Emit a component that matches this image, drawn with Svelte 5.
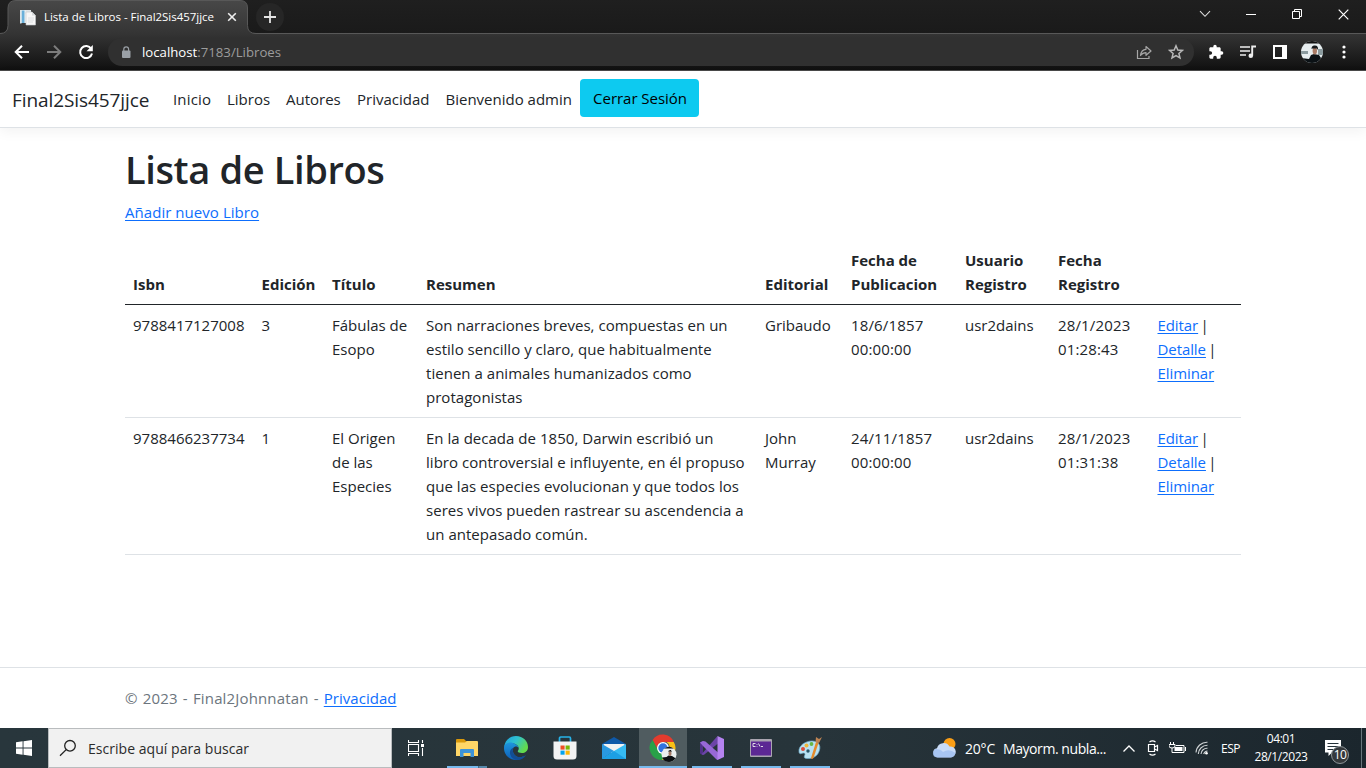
<script>
  const nav = [
    { label: 'Inicio', cls: 'n1' },
    { label: 'Libros', cls: 'n2' },
    { label: 'Autores', cls: 'n3' },
    { label: 'Privacidad', cls: 'n4' },
    { label: 'Bienvenido admin', cls: 'n5' }
  ];
  const heads = ['Isbn', 'Edición', 'Título', 'Resumen', 'Editorial', 'Fecha de\nPublicacion', 'Usuario\nRegistro', 'Fecha\nRegistro', ''];
  const books = [
    ['9788417127008', '3', 'Fábulas de\nEsopo', 'Son narraciones breves, compuestas en un\nestilo sencillo y claro, que habitualmente\ntienen a animales humanizados como\nprotagonistas', 'Gribaudo', '18/6/1857\n00:00:00', 'usr2dains', '28/1/2023\n01:28:43'],
    ['9788466237734', '1', 'El Origen\nde las\nEspecies', 'En la decada de 1850, Darwin escribió un\nlibro controversial e influyente, en él propuso\nque las especies evolucionan y que todos los\nseres vivos pueden rastrear su ascendencia a\nun antepasado común.', 'John\nMurray', '24/11/1857\n00:00:00', 'usr2dains', '28/1/2023\n01:31:38']
  ];
</script>

<div class="screen">
  <div class="tabstrip">
    <div class="tab">
      <svg class="tabshape" width="256" height="34" viewBox="0 0 256 34">
        <defs><linearGradient id="tg" x1="0" y1="0" x2="0" y2="1"><stop offset="0" stop-color="#484848" /><stop offset="1" stop-color="#343434" /></linearGradient></defs>
        <path d="M0 34V33.500Q8 33.500 8 25.500V8Q8 .5 16 .5H240Q247.500 .5 247.500 8V25.500Q247.500 33.500 256 33.500V34Z" fill="url(#tg)" />
        <path d="M0 33.500Q8 33.500 8 25.500V8Q8 .5 16 .5H240Q247.500 .5 247.500 8V25.500Q247.500 33.500 256 33.500" fill="none" stroke="#585858" />
      </svg>
      <svg class="fav" width="16" height="17" viewBox="0 0 16 17">
        <path d="M1 1H11V14H1Z" fill="#eef2f4" /><path d="M1.500 1.500H4.500V14H1.500Z" fill="#69b0da" /><path d="M0 1H1.500V14.500H0Z" fill="#dce6ea" /><path d="M5.500 1H11V5H5.500Z" fill="#dfe5e8" />
        <path d="M6 3H12L15.500 6.500V16H6Z" fill="#f7f7f7" stroke="#c5c8ca" stroke-width=".6" /><path d="M12 3V6.500H15.500" fill="#d6d9db" /><path d="M8 9H14M8 11H14M8 13H13" stroke="#d5d8da" stroke-width=".8" />
      </svg>
      <span class="tabtitle">Lista de Libros - Final2Sis457jjce</span>
      <svg class="tabx" width="10" height="10" viewBox="0 0 10 10"><path d="M1.200 1.200L8.800 8.800M8.800 1.200L1.200 8.800" stroke="#eee" stroke-width="1.600" /></svg>
    </div>
    <div class="plus"><svg width="12" height="12" viewBox="0 0 12 12"><path d="M6 0V12M0 6H12" stroke="#e4e4e4" stroke-width="1.800" /></svg></div>
    <div class="wins">
      <span><svg width="12" height="8" viewBox="0 0 12 8"><path d="M1 1.200L6 6.300L11 1.200" fill="none" stroke="#ddd" stroke-width="1.100" /></svg></span>
      <span><svg width="10" height="2" viewBox="0 0 10 2"><path d="M0 1.500H10" stroke="#fff" /></svg></span>
      <span><svg width="10" height="10" viewBox="0 0 10 10"><path d="M.5 2.500H7.500V9.500H.5ZM2.500 2.500V.5H9.500V7.500H7.500" fill="none" stroke="#fff" /></svg></span>
      <span><svg width="11" height="11" viewBox="0 0 11 11"><path d="M.7 .7L10.300 10.300M10.300 .7L.7 10.300" stroke="#fff" stroke-width="1.200" /></svg></span>
    </div>
  </div>
  <div class="toolbar">
    <div class="slots">
      <span><svg width="16" height="16" viewBox="0 0 16 16"><path d="M15 8H2M8 1.700L1.700 8L8 14.300" fill="none" stroke="#fff" stroke-width="2" /></svg></span>
      <span><svg width="16" height="16" viewBox="0 0 16 16"><path d="M1 8H14M8 1.700L14.300 8L8 14.300" fill="none" stroke="#7c7c7c" stroke-width="2" /></svg></span>
      <span><svg width="16" height="16" viewBox="0 0 16 16"><path d="M13.200 4.800A6 6 0 1 0 14 9.500" fill="none" stroke="#fff" stroke-width="2" /><path d="M14.800 1V7.300H8.500Z" fill="#fff" /></svg></span>
    </div>
    <div class="omni">
      <svg class="lock" width="10" height="13" viewBox="0 0 10 13"><rect x="1" y="4.500" width="8.500" height="7.500" rx="1" fill="#9aa0a6" /><path d="M2.800 5V3.200A2.400 2.400 0 0 1 7.600 3.200V5" fill="none" stroke="#9aa0a6" stroke-width="1.200" /></svg>
      <span class="url"><b>localhost</b>:7183/Libroes</span>
      <div class="slots">
        <span><svg width="16" height="16" viewBox="0 0 16 16"><path d="M1.500 6V14.500H13V12" fill="none" stroke="#a6a6a6" stroke-width="1.200" /><path d="M4.500 11.500C5 7.500 7 5.500 10 5.300V2.500L15 7L10 11.300V8.600C7.500 8.600 6 9.500 4.500 11.500Z" fill="none" stroke="#a6a6a6" stroke-width="1.200" stroke-linejoin="round" /></svg></span>
        <span><svg width="16" height="16" viewBox="0 0 16 16"><path d="M8 1.800L9.800 6L14.400 6.400L10.900 9.400L12 13.900L8 11.500L4 13.900L5.100 9.400L1.600 6.400L6.200 6Z" fill="none" stroke="#b8b8b8" stroke-width="1.500" /></svg></span>
      </div>
    </div>
    <div class="slots">
      <span><svg width="16" height="16" viewBox="0 0 24 24"><path d="M20.500 11H19V7c0-1.100-.9-2-2-2h-4V3.500a2.500 2.500 0 0 0-5 0V5H4c-1.100 0-2 .9-2 2v3.800h1.500a2.700 2.700 0 0 1 0 5.400H2V20c0 1.100.9 2 2 2h3.800v-1.500a2.700 2.700 0 0 1 5.400 0V22H17c1.100 0 2-.9 2-2v-4h1.500a2.500 2.500 0 0 0 0-5z" fill="#fff" /></svg></span>
      <span><svg width="16" height="14" viewBox="0 0 16 14"><path d="M0 2H10M0 6H10M0 10H6" stroke="#eee" stroke-width="1.700" /><path d="M12.200 10.500V1.500H16" fill="none" stroke="#eee" stroke-width="1.900" /><circle cx="10.800" cy="10.800" r="2.300" fill="#eee" /></svg></span>
      <span><svg width="14" height="14" viewBox="0 0 14 14"><path d="M0 0H14V14H0ZM2 2V12H9V2Z" fill="#fff" fill-rule="evenodd" /></svg></span>
      <span><svg width="22" height="22" viewBox="0 0 22 22"><defs><clipPath id="av"><circle cx="11" cy="11" r="11" /></clipPath></defs><g clip-path="url(#av)"><rect width="22" height="22" fill="#e6edef" /><rect width="22" height="2.500" fill="#111" /><path d="M0 10H7V13H0ZM17 8H22V14H17Z" fill="#8a9a9e" /><path d="M0 17L8 18L10 14L13 13L18 14L22 20V22H0Z" fill="#0b1115" /><ellipse cx="13.800" cy="9.800" rx="2.200" ry="3.600" fill="#a87b66" /><path d="M10.500 8Q10.500 4 14 4.500Q17.500 4.500 17 9L16 7.500H11.500Z" fill="#16191b" /></g></svg></span>
      <span><svg width="4" height="14" viewBox="0 0 4 14"><g fill="#fff"><circle cx="2" cy="2" r="1.600" /><circle cx="2" cy="7" r="1.600" /><circle cx="2" cy="12" r="1.600" /></g></svg></span>
    </div>
  </div>

  <div class="page">
    <header>
      <a class="brand" href="#top">Final2Sis457jjce</a>
      {#each nav as n}<a class="nav {n.cls}" href="#top">{n.label}</a>{/each}
      <button>Cerrar Sesión</button>
    </header>
    <main>
      <h1>Lista de Libros</h1>
      <p><a class="link add" href="#top">Añadir nuevo Libro</a></p>
      <table>
        <colgroup><col class="c1" /><col class="c2" /><col class="c3" /><col class="c4" /><col class="c5" /><col class="c6" /><col class="c7" /><col class="c8" /><col class="c9" /></colgroup>
        <thead><tr>{#each heads as h}<th>{h}</th>{/each}</tr></thead>
        <tbody>
          {#each books as b}
            <tr>
              {#each b as cell, i}<td class="t{i}">{cell}</td>{/each}
              <td class="acts"><a class="link" href="#top">Editar</a> |<br /><a class="link" href="#top">Detalle</a> |<br /><a class="link" href="#top">Eliminar</a></td>
            </tr>
          {/each}
        </tbody>
      </table>
    </main>
    <footer><div>© 2023 - Final2Johnnatan - <a class="link" href="#top">Privacidad</a></div></footer>
  </div>

  <div class="taskbar">
    <div class="start"><svg width="16" height="16" viewBox="0 0 16 16"><path d="M0 2.200L6.600 1.300V7.500H0ZM7.500 1.200L16 0V7.500H7.500ZM0 8.400H6.600V14.700L0 13.800ZM7.500 8.400H16V16L7.500 14.800Z" fill="#fff" /></svg></div>
    <div class="search">
      <svg width="18" height="18" viewBox="0 0 18 18"><circle cx="11" cy="6.800" r="5.300" fill="none" stroke="#222" stroke-width="1.300" /><path d="M7.200 10.600L1 16.800" stroke="#222" stroke-width="1.300" /></svg>
      <span>Escribe aquí para buscar</span>
    </div>
    <div class="tview"><svg width="17" height="16" viewBox="0 0 17 16"><path d="M.5 0V2.500H10.500V0M.5 16V13.500H10.500V16M.5 4.500H10.500V11.500H.5ZM14.500 0V3M14.500 8V16" fill="none" stroke="#fff" stroke-width="1.100" /><rect x="13" y="4" width="3" height="3" fill="#fff" /></svg></div>
    <div class="app">
      <svg width="22" height="20" viewBox="0 0 22 20"><path d="M0 2Q0 1 1 1H8L10 3H21V8H0Z" fill="#d9980b" /><path d="M0 4.500H9L11 3H21Q22 3 22 4V18H0Z" fill="#ffd667" /><path d="M4 19V12Q4 11 5 11H17Q18 11 18 12V19H14.500V15H7.500V19Z" fill="#3d93d8" /></svg>
      <i class="multi"></i>
    </div>
    <div class="app">
      <svg width="24" height="24" viewBox="0 0 24 24"><defs><linearGradient id="e1" x1="0" y1="0" x2="1" y2=".5"><stop offset="0" stop-color="#1f9fe0" /><stop offset=".5" stop-color="#2fc2d0" /><stop offset="1" stop-color="#63da4c" /></linearGradient><linearGradient id="e2" x1="0" y1="0" x2="0" y2="1"><stop offset="0" stop-color="#1e96dd" /><stop offset="1" stop-color="#0e5fb8" /></linearGradient></defs><path d="M.2 11C.8 4.500 5.600 0 12 0C19 0 24 5 24 11C24 15 21 17 18 17C15 17 13.500 16 13.800 15C15 13.500 15 12 14.200 10.500C12.500 7 5 5 .2 11Z" fill="url(#e1)" /><path d="M0 12C0 7.500 5 5.500 9 7C12 8 14.500 10 14.600 12.200C14 10.600 12 10 10.300 11C7.600 12.600 8.500 18 12.500 20.500C15.500 22.200 18.500 21 20.500 19.500C18 23 15 24 12 24C5 24 0 18.500 0 12Z" fill="url(#e2)" /><path d="M9.500 11.800C7.800 15 9.500 19 13.500 20.800C17 22 20 20.800 22.400 18.500C20 23 15.500 24.500 11.500 23.800C5 21.500 4 13.500 9.500 11.800Z" fill="#124d94" /></svg>
    </div>
    <div class="app">
      <svg width="24" height="24" viewBox="0 0 24 24"><path d="M6.500 6V2.200Q6.500 1 7.700 1H16.300Q17.500 1 17.500 2.200V6" fill="none" stroke="#27b2e8" stroke-width="1.700" /><path d="M.5 5.500H23.500V20Q23.500 23.500 20 23.500H4Q.5 23.500 .5 20Z" fill="#f3f3f3" /><path d="M7.500 9.500H11.600V13.600H7.500Z" fill="#f04e23" /><path d="M12.600 9.500H16.700V13.600H12.600Z" fill="#7cb705" /><path d="M7.500 14.600H11.600V18.700H7.500Z" fill="#04a3ed" /><path d="M12.600 14.600H16.700V18.700H12.600Z" fill="#fbb605" /></svg>
    </div>
    <div class="app">
      <svg width="24" height="22" viewBox="0 0 24 22"><path d="M0 7L12 0L24 7V12H0Z" fill="#0f59a8" /><path d="M1.500 7H22.500V16H1.500Z" fill="#f2f2f2" /><path d="M0 7L12 14L0 22Z" fill="#2998e0" /><path d="M24 7V22H0L12 14Z" fill="#36bbf3" /><path d="M0 22L12 14L24 22Z" fill="#1d9fe5" /></svg>
    </div>
    <div class="app active">
      <svg width="28" height="28" viewBox="0 0 28 28"><path d="M3.600 6A12 12 0 0 1 24.800 8H14A6 6 0 0 0 8.500 16Z" fill="#e33b2e" /><path d="M3.600 6A12 12 0 0 0 13 25.900L18.500 16.500A6 6 0 0 1 8.700 15.500Z" fill="#28a148" /><path d="M24.800 8A12 12 0 0 1 13 25.900L19.200 17A6 6 0 0 0 17.500 8Z" fill="#fbc116" /><circle cx="14" cy="14" r="6" fill="#fff" /><circle cx="14" cy="14" r="4.700" fill="#3072df" /><circle cx="20" cy="20.500" r="7.500" fill="#e9eeee" /><path d="M15.400 14.600A7.500 7.500 0 0 1 24.600 14.600Z" fill="#111" /><path d="M13.200 23.500L17.500 23L19.500 21.500L23 22L26.500 24.300Q24 28 20 28Q15 28 13.200 23.500Z" fill="#0c1013" /><ellipse cx="21" cy="19.500" rx="1.500" ry="2.500" fill="#a47a66" /><path d="M19 18.500Q19 15.500 22 16L23 18.500L22 17.500H19Z" fill="#111" /></svg>
      <i></i>
    </div>
    <div class="app">
      <svg width="24" height="24" viewBox="0 0 24 24"><path d="M0 6.500L3 5V19L0 17.500Z" fill="#52318a" /><path d="M1.500 18.300L17.500 0L18 7.500L4 18.800L3 19Z" fill="#6c44a8" /><path d="M0 6.500L3 5L5.500 5.500L18 16.500V24L16.500 23.500L3 10Z" fill="#9868d6" /><path d="M17.500 0L24 3V21L17.500 24Z" fill="#b583f0" /></svg>
      <i></i>
    </div>
    <div class="app">
      <svg width="22" height="18" viewBox="0 0 22 18"><rect width="22" height="18" rx="1" fill="#aaa5b1" /><rect x="1" y="2.500" width="20" height="14" fill="#5c2894" /><path d="M5.500 4.500H3V7.500H5.500M7 5V5.800M7 7V7.600M8.500 4.500L10 7.500M11 7.500H13" fill="none" stroke="#eee" stroke-width=".9" /></svg>
      <i></i>
    </div>
    <div class="app">
      <svg width="24" height="24" viewBox="0 0 24 24"><path d="M1 16C0 10 7 5 14 5C20 5 23 9 21.500 14C20 20 15 23 8.500 22.500C5 22 6.500 20 7 18.500C7 16.500 5 17 3.500 17.500C2 18 1.200 17.500 1 16Z" fill="#b8e2f3" stroke="#6daac8" stroke-width=".7" /><circle cx="5" cy="13" r="2" fill="#dc4d3b" /><circle cx="8.500" cy="9.500" r="2" fill="#f0b63a" /><circle cx="13.500" cy="8" r="1.900" fill="#67b645" /><circle cx="10" cy="15" r="1.700" fill="#29566a" /><path d="M13 22L18 6L20.500 7L15.500 22Q13.500 24 13 22Z" fill="#e48b2c" /><path d="M17.500 6L18 1L21 3L24 1L21 7Z" fill="#bd8353" /></svg>
      <i></i>
    </div>
    <div class="weather">
      <svg width="25" height="22" viewBox="0 0 25 22"><circle cx="17.500" cy="7" r="6" fill="#fa9e16" /><path d="M5.500 20.500A4.700 4.700 0 0 1 5 11.200A6.800 6.800 0 0 1 17.500 9.500A5.500 5.500 0 0 1 19 20.500Z" fill="#c9dcf8" /><path d="M3 12Q9 12 11 15Q17 11 23.500 16Q22.500 20.500 18 20.500H5.500Q0 20 1 15Z" fill="#92b6ee" opacity=".6" /></svg>
      <span class="temp">20°C</span><span class="cond">Mayorm. nubla...</span>
    </div>
    <div class="tray">
      <span><svg width="12" height="7" viewBox="0 0 12 7"><path d="M.5 6.500L6 1L11.500 6.500" fill="none" stroke="#fff" stroke-width="1.300" /></svg></span>
      <span><svg width="12" height="16" viewBox="0 0 12 16"><path d="M1.500 4.500H7.500V11.500H1.500ZM7.500 7L10.500 5.500V10.500L7.500 9M2.500 2Q5.500 -.3 8.500 2M2.500 14Q5.500 16.300 8.500 14" fill="none" stroke="#fff" stroke-width="1.200" /></svg></span>
      <span><svg width="17" height="12" viewBox="0 0 17 12"><path d="M1.500 0V2M4.500 0V2M0 2.500H6V4Q6 6 3 6Q0 6 0 4ZM3 6V10.500H15V3.500H7" fill="none" stroke="#fff" /><path d="M5.500 5H13.500V9H5.500Z" fill="#fff" /><path d="M16.500 5V9" stroke="#fff" /></svg></span>
      <span><svg width="14" height="14" viewBox="0 0 14 14"><g fill="none" stroke="#cfd3d5" stroke-width="1.100"><path d="M1 11.500A11 11 0 0 1 12.500 1.200" /><path d="M3.300 13A9 9 0 0 1 12.500 4.300" /><path d="M6 13A6 6 0 0 1 12.500 7.300" /><path d="M8.700 13A4 4 0 0 1 12.500 10" /></g><circle cx="11.500" cy="12.300" r="1.300" fill="#fff" /></svg></span>
    </div>
    <div class="lang">ESP</div>
    <div class="clock"><span>04:01</span><span class="date">28/1/2023</span></div>
    <div class="notif">
      <svg width="16" height="16" viewBox="0 0 16 16"><path d="M0 0H16V12.500H7L3.500 16V12.500H0Z" fill="#fff" /><path d="M2.500 3.500H13.500M2.500 6.500H13.500M2.500 9.500H9" stroke="#26333a" /></svg>
      <em>10</em>
    </div>
    <div class="peek"></div>
  </div>
</div>

<style>
  :global(body) { margin: 0; overflow: hidden; }
  svg { display: block; flex: none; }
  .screen { width: 1366px; height: 768px; display: flex; flex-direction: column; background: #fff; font-family: "Open Sans", "Noto Sans", sans-serif; overflow: hidden; }
  .tabstrip { height: 34px; box-sizing: border-box; display: flex; background: linear-gradient(#1f1f1f, #1a1a1a); border-bottom: 1px solid #585858; flex: none; }
  .tab { width: 256px; height: 34px; position: relative; display: flex; align-items: center; }
  .tabshape { position: absolute; left: 0; top: 0; }
  .fav { position: relative; margin-left: 20px; }
  .tabtitle { position: relative; margin-left: 8px; width: 172px; font-size: 11.500px; letter-spacing: -.03px; color: #fff; white-space: nowrap; margin-top: -1px; }
  .tabx { position: relative; margin-left: 11px; }
  .plus { width: 28px; height: 28px; border-radius: 50%; background: #262626; margin-top: 3px; display: flex; align-items: center; justify-content: center; }
  .wins { margin-left: auto; display: flex; height: 28px; }
  .wins span { width: 46px; display: flex; align-items: center; justify-content: center; }
  .toolbar { height: 37px; box-sizing: border-box; padding: 0 6px; display: flex; align-items: center; background: linear-gradient(#343434, #101010); border-bottom: 1px solid #4a4a4a; flex: none; }
  .slots { display: flex; }
  .slots span { width: 32px; height: 28px; display: flex; align-items: center; justify-content: center; }
  .omni { flex: 1; margin: 0 6px; height: 28px; border-radius: 14px; background: #303030; display: flex; align-items: center; padding-right: 2px; }
  .lock { margin-left: 13px; }
  .url { flex: 1; margin-left: 11px; font-size: 13.200px; color: #9c9c9c; letter-spacing: 0; }
  .url b { font-weight: 400; color: #fff; }
  .page { height: 657px; flex: none; display: flex; flex-direction: column; color: #212529; font-size: 15px; line-height: 24px; }
  header { height: 57px; box-sizing: border-box; display: flex; align-items: flex-start; padding: 8px 0 0 12px; border-bottom: 1px solid #dee2e6; box-shadow: 0 4px 12px rgba(0,0,0,.05); flex: none; }
  header a { color: #212529; text-decoration: none; white-space: nowrap; }
  .brand { font-size: 19px; line-height: 30px; letter-spacing: -.08px; width: 137px; margin: 6px 16px 0 0; }
  .nav { padding: 8px 8px 0; }
  .n1 { width: 38px; letter-spacing: .15px; } .n2 { width: 43px; } .n3 { width: 55px; } .n4 { width: 72.500px; } .n5 { width: 126.500px; }
  button { width: 119px; height: 38px; border: 0; border-radius: 4px; background: #0dcaf0; color: #000; font: 15px/38px "Open Sans", sans-serif; letter-spacing: -.04px; padding: 0 0 0 1px; white-space: nowrap; }
  main { flex: 1; padding: 17px 125px 0; }
  h1 { margin: 0 0 7px; font-size: 38px; line-height: 48px; font-weight: 600; letter-spacing: -.38px; }
  p { margin: 0; height: 40px; }
  .add { letter-spacing: .05px; }
  .link { color: #0d6efd; text-decoration: underline; text-underline-offset: 2px; }
  table { width: 1116px; table-layout: fixed; border-collapse: collapse; }
  .c1 { width: 128.500px; } .c2 { width: 70.500px; } .c3 { width: 94px; } .c4 { width: 339px; } .c5 { width: 86px; } .c6 { width: 114px; } .c7 { width: 93px; } .c8 { width: 99.500px; } .c9 { width: 91.500px; }
  th { font-weight: 700; text-align: left; vertical-align: bottom; border-bottom: 1px solid #212529; }
  th, td { padding: 8px; white-space: pre; }
  td { vertical-align: top; border-bottom: 1px solid #dee2e6; }
  .t3 { letter-spacing: .03px; }
  .t5, .t7 { letter-spacing: .15px; }
  .acts { letter-spacing: -.08px; word-spacing: -1.500px; }
  footer { height: 61px; box-sizing: border-box; border-top: 1px solid #dee2e6; padding-left: 125px; line-height: 60px; color: #6c757d; letter-spacing: .15px; word-spacing: 1.100px; }
  footer .link { letter-spacing: .03px; }
  .taskbar { height: 40px; display: flex; align-items: stretch; background: linear-gradient(90deg, #28363c, #27343a 60%, #1b262d); color: #fff; flex: none; }
  .taskbar > div { display: flex; align-items: center; flex: none; }
  .start { width: 48px; justify-content: center; }
  .search { width: 344px; box-sizing: border-box; background: #f1f1f1; border: 1px solid #b9bcbe; padding-left: 10px; color: #2b2b2b; font-size: 14px; }
  .search span { margin-left: 11px; letter-spacing: .04px; }
  .tview { width: 34px; padding-left: 16px; }
  .app { width: 49px; justify-content: center; position: relative; }
  .active { background: linear-gradient(90deg, transparent 1px, #505c60 1px); }
  .app i { position: absolute; left: 5px; bottom: 0; width: 40px; height: 2px; background: #76b9ed; }
  .app.active i { left: 1px; width: 48px; }
  .app i.multi { background: linear-gradient(90deg, #76b9ed 31px, #456b83 31px, #456b83 32px, #5588aa 32px); }
  .weather { width: 176px; margin-left: auto; font-size: 14px; white-space: nowrap; }
  .weather svg { margin-left: -1px; }
  .temp { width: 30px; margin-left: 8px; letter-spacing: -.2px; }
  .cond { margin-left: 8px; letter-spacing: -.43px; }
  .tray { width: 100px; margin-left: 8px; }
  .tray span { width: 24.300px; display: flex; justify-content: center; }
  .lang { width: 29px; margin-left: 4px; font-size: 12px; letter-spacing: -.5px; }
  .clock { width: 62px; flex-direction: column; justify-content: center; font-size: 12px; letter-spacing: -.42px; line-height: 18px; padding-bottom: 1px; }
  .notif { width: 49px; padding-left: 13px; box-sizing: border-box; position: relative; }
  .notif em { position: absolute; left: 19px; top: 18px; width: 16px; height: 16px; border-radius: 50%; border: 1px solid #8e9599; background: #35393c; font: 12px/16px "Open Sans", sans-serif; letter-spacing: -.5px; text-align: center; }
  .peek { width: 4px; border-left: 1px solid #68757b; }
</style>
